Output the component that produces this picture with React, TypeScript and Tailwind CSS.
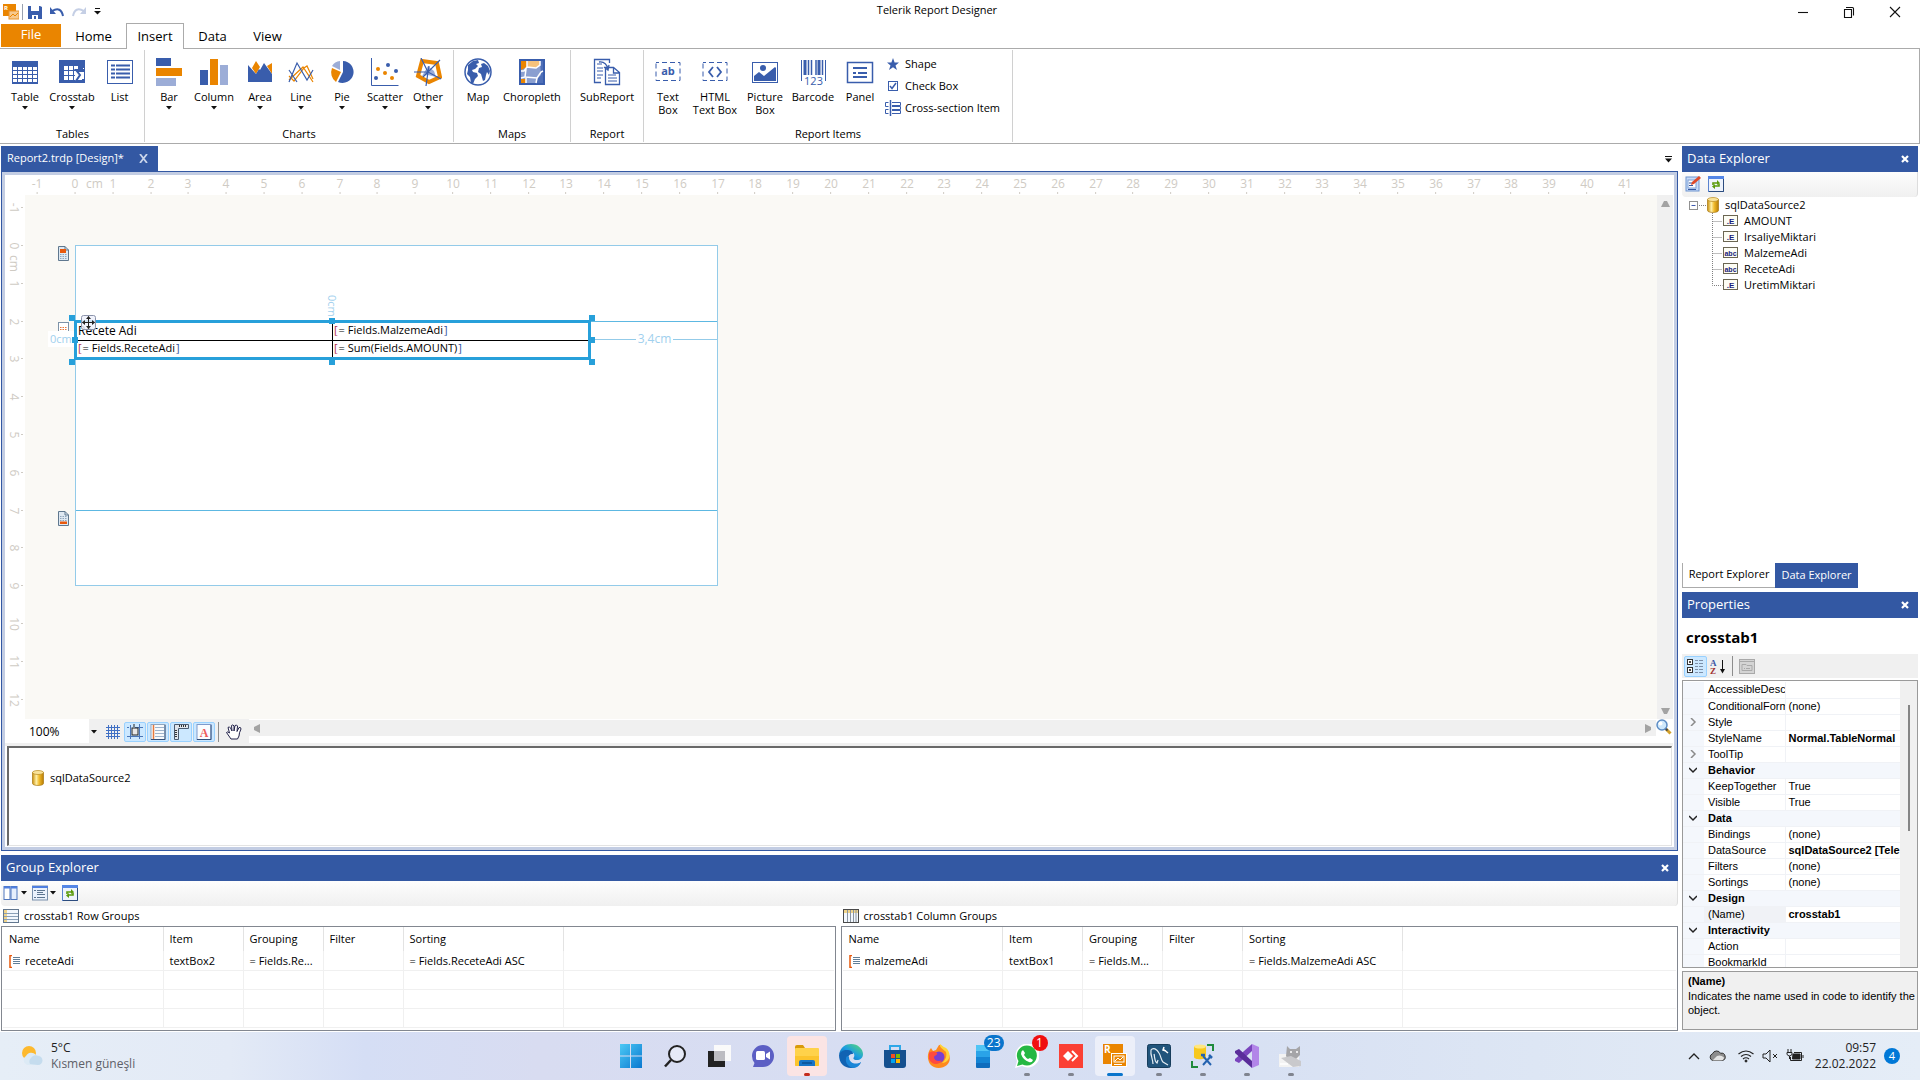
import type { ReactNode } from "react";
import clsx from "clsx";

const BLUE = "#395dac";
const ORANGE = "#ea8500";
const LIGHT = "#9cadd7";
const CM = 37.8;

/* ---------- ribbon icons ---------- */

const Big = ({ children }: { children: ReactNode }) => (
  <svg width="28" height="28" viewBox="0 0 28 28" fill="none" className="shrink-0">
    {children}
  </svg>
);

const TableIcon = () => (
  <Big>
    <rect x="1" y="3" width="26" height="23" fill={BLUE} />
    {[9, 13, 17, 21].map((y) =>
      [2, 7, 12, 17, 22].map((x) => <rect key={`${x}-${y}`} x={x} y={y} width="4" height="3" fill="#fff" />)
    )}
  </Big>
);

const CrosstabIcon = () => (
  <Big>
    <rect x="1" y="2" width="26" height="23" fill={BLUE} />
    {[8, 13, 18].map((y) => [6, 11, 16].map((x) => <rect key={`${x}-${y}`} x={x} y={y} width="4" height="4" fill="#fff" />))}
    <path d="M17 10h8v4h-8z M17 10v14h9V10z" fill="#fff" />
    <path d="M25 14v-2h-7l4 5-4 6h7v-2" stroke={BLUE} strokeWidth="2" />
  </Big>
);

const ListIcon = () => (
  <Big>
    <rect x="1.5" y="2.5" width="25" height="23" stroke={BLUE} />
    {[7, 11, 15, 19].map((y) => (
      <path key={y} d={`M5 ${y + 0.5}h4M10 ${y + 0.5}h14`} stroke={BLUE} strokeWidth="2" />
    ))}
  </Big>
);

const BarIcon = () => (
  <Big>
    <rect x="1" y="0" width="15" height="8" fill={BLUE} />
    <rect x="1" y="10" width="26" height="8" fill={ORANGE} />
    <rect x="1" y="20" width="20" height="8" fill={LIGHT} />
  </Big>
);

const ColumnIcon = () => (
  <Big>
    <rect x="0" y="12" width="8" height="15" fill={BLUE} />
    <rect x="10" y="1" width="8" height="26" fill={ORANGE} />
    <rect x="20" y="7" width="8" height="20" fill={LIGHT} />
  </Big>
);

const AreaIcon = () => (
  <Big>
    <path d="M10 3l4 6-4 7-4-6zM21 8l5-3v11z" fill={ORANGE} />
    <path d="M2 24V7l8 9 3-5 1 1 4-7 8 11v8z" fill={BLUE} />
  </Big>
);

const LineIcon = () => (
  <Big>
    <path d="M2 22L16 9l10 15M2 18l5 5 10-13 3-2 6 13" stroke={ORANGE} strokeWidth="1.2" />
    <path d="M2 24L10 5l10 17 6-10M2 12l8 12" stroke={BLUE} strokeWidth="1.2" />
  </Big>
);

const PieIcon = () => (
  <Big>
    <path d="M15 3a11 11 0 1 1-5 21l5-10z" fill={BLUE} />
    <path d="M13 14L8 24A12 12 0 0 1 4 10z" fill={ORANGE} />
    <path d="M12 12L4 8a10 10 0 0 1 8-5z" fill={LIGHT} />
  </Big>
);

const ScatterIcon = () => (
  <Big>
    <path d="M.5 0v27.500h27" stroke={BLUE} />
    <g fill={BLUE}>
      <circle cx="17" cy="7" r="2" />
      <circle cx="25" cy="13" r="2" />
      <circle cx="5" cy="20" r="2" />
    </g>
    <g fill={ORANGE}>
      <circle cx="7" cy="11" r="2" />
      <circle cx="14" cy="15" r="2" />
      <circle cx="21" cy="20" r="2" />
    </g>
  </Big>
);

const OtherIcon = () => (
  <Big>
    <path d="M8 3l15 2 3 14-11 5-11-6z" stroke={ORANGE} strokeWidth="4" />
    <path d="M14 8l6 5 2 6-8-2-6 1 3-5z" fill={LIGHT} />
    <path d="M7 0l7 14L26 2M0 14l14 0 13 7M14 14l-2 14M9 19l5-5 1-6" stroke={BLUE} strokeWidth="1.2" />
  </Big>
);

const MapIcon = () => (
  <Big>
    <circle cx="14" cy="14" r="13" fill="#fff" stroke={BLUE} strokeWidth="1.500" />
    <path
      d="M4 7l5-4 5-1 1 3-3 1 2 2-3 3-3 1 1 2 4 1 1 3-3 3-2 5-2-1-1-6-3-3 1-4zM17 6l3-1 4 3 2 5-1 4-2-3-1 3-1 5-2 1-2-7-3-2 1-4 3-1z"
      fill={BLUE}
    />
  </Big>
);

const ChoroplethIcon = () => (
  <Big>
    <rect x="1" y="1" width="26" height="26" fill={BLUE} />
    <rect x="3" y="3" width="22" height="22" fill="#8a9fd0" />
    <path d="M3 3h6v6l-6 3zM3 21h5v4H3z" fill={ORANGE} />
    <path d="M10 3h12v4l-5 3-8-1z" fill="#f5c27c" />
    <path d="M22 3h3v22h-7l1-4 4-4z" fill="#4f6fb8" />
    <path d="M9 3v6l9 1 4-3V3M9 9l-3 4-3 0M8 11l-1 8-4 1M7 19l12 1 4-6 2-1M18 25l1-5M8 25v-5" stroke="#fff" strokeWidth="1.500" />
  </Big>
);

const SubReportIcon = () => (
  <Big>
    <path d="M8 24.500H1.500V1.500h15V5" stroke={BLUE} strokeWidth="1.300" />
    <path d="M12.500 9.500h8l6 5v12h-14zM20.500 9.500v5.500h6" fill="#fff" stroke={BLUE} strokeWidth="1.300" />
    <path d="M4 6h5M4 10h6M4 13h6M4 17h6M4 20h4M15 17h8M15 20h9M15 23h9" stroke={BLUE} />
    <path d="M6 4q7-1 9 7M11 9l4 3 1-5" stroke={BLUE} strokeWidth="1.300" />
  </Big>
);

const DashBox = ({ label }: { label: string }) => (
  <Big>
    <rect x="2" y="4.500" width="24" height="18" stroke={BLUE} strokeDasharray="5 3" strokeDashoffset="2" />
    <text x="14" y="17" textAnchor="middle" fontSize="11" fontWeight="700" fontFamily="Open Sans, sans-serif" fill={BLUE}>
      {label}
    </text>
  </Big>
);

const HtmlBoxIcon = () => (
  <Big>
    <rect x="2" y="4.500" width="24" height="18" stroke={BLUE} strokeDasharray="5 3" strokeDashoffset="2" />
    <path d="M12 9l-4 5 4 5M16 9l4 5-4 5" stroke={BLUE} strokeWidth="1.800" />
  </Big>
);

const PictureIcon = () => (
  <Big>
    <rect x="1.500" y="4.500" width="25" height="20" stroke={BLUE} />
    <circle cx="12" cy="10" r="3" fill={BLUE} />
    <path d="M3 23v-5l5-4 5 4 11-9 1 1v13z" fill={BLUE} />
  </Big>
);

const BarcodeIcon = () => (
  <Big>
    <path d="M2.500 2v21M26.500 2v21" stroke={BLUE} />
    <path d="M6 2v15M20 2v15" stroke={BLUE} strokeWidth="3" />
    <path d="M9.500 2v15M12.500 2v15M17 2v15M23.500 2v15" stroke={BLUE} strokeWidth="1.500" />
    <text x="14.500" y="27" textAnchor="middle" fontSize="11" fontFamily="Open Sans, sans-serif" fill={BLUE}>
      123
    </text>
  </Big>
);

const PanelIcon = () => (
  <Big>
    <rect x="1.500" y="4.500" width="25" height="20" stroke={BLUE} strokeWidth="1.500" />
    <path d="M7 10h14M7 15h3M12 15h9M7 19h14" stroke={BLUE} strokeWidth="2" />
  </Big>
);

/* ---------- small icons ---------- */

const Caret = () => (
  <svg width="6" height="4" viewBox="0 0 6 4" className="shrink-0">
    <path d="M0 0h6L3 3.500z" fill="#111" />
  </svg>
);

const CloseX = ({ color = "#fff" }: { color?: string }) => (
  <svg width="8" height="8" viewBox="0 0 8 8">
    <path d="M1 1l6 6M7 1L1 7" stroke={color} strokeWidth="2.200" />
  </svg>
);

const Database = () => (
  <svg width="12" height="16" viewBox="0 0 12 16" className="shrink-0">
    <defs>
      <linearGradient id="gold">
        <stop offset="0" stopColor="#c98f0a" />
        <stop offset=".35" stopColor="#fff0a8" />
        <stop offset=".6" stopColor="#f2bc2c" />
        <stop offset="1" stopColor="#b87d05" />
      </linearGradient>
    </defs>
    <path d="M.5 2.500v11c0 2.600 11 2.600 11 0v-11z" fill="url(#gold)" stroke="#a87812" strokeWidth=".7" />
    <ellipse cx="6" cy="2.500" rx="5.500" ry="2" fill="#f9e39a" stroke="#b98a1c" strokeWidth=".7" />
  </svg>
);

const Refresh = () => (
  <svg width="16" height="16" viewBox="0 0 16 16">
    <rect x=".5" y=".5" width="15" height="15" fill="#eef3fc" stroke="#5a83cf" />
    <rect x="0" y="0" width="16" height="3" fill="#5486e6" />
    <path d="M15.500 3v12.500H1" stroke="#2c4c7e" fill="none" />
    <path d="M5 9V7h5M11 7.500V10H6" stroke="#5a9a0a" strokeWidth="1.600" fill="none" />
    <path d="M9 4l3 3-3 2zM7 8l-3 2.500L7 13z" fill="#5a9a0a" />
  </svg>
);

const EditSource = () => (
  <svg width="16" height="16" viewBox="0 0 16 16">
    <rect x="1" y="1" width="13" height="14" fill="#c9dcf8" stroke="#6d93cf" />
    <rect x="3" y="4" width="8" height="8" fill="#fff" stroke="#7d9fd6" />
    <path d="M4 7h5M4 9.500h4M3 13.500h8" stroke="#3557a0" />
    <path d="M6 9l1-3 7-6 2 2-7 6z" fill="#e04a2a" />
  </svg>
);

const SectionIcon = ({ band }: { band: "top" | "body" | "bottom" }) => (
  <svg width="11" height={band === "body" ? 11 : 15} viewBox={band === "body" ? "0 0 11 11" : "0 0 11 15"}>
    {band === "body" ? (
      <path d="M.5 0v10.500h10V0M.5.5h10" stroke="#7d93a8" fill="#fff" />
    ) : (
      <path d="M.5.5h6.500l3.500 3.500v10.500H.5z" stroke="#5f788f" fill="#dfe9f2" />
    )}
    {band !== "body" && <path d="M7 .5V4h3.500" stroke="#5f788f" fill="none" />}
    {band === "top" && <rect x="2" y="3" width="6" height="4" fill="#e8590c" />}
    {band === "bottom" && <rect x="2" y="10.500" width="7" height="2.500" fill="#e8590c" />}
    <path
      d={band === "bottom" ? "M2 5.500h7M2 7.500h7M2 9.500h7" : band === "top" ? "M2 8.500h7M2 10.500h7M2 12.500h7" : "M2 5.500h7M2 7.500h7M2 9.500h7"}
      stroke={band === "body" ? "#e8793c" : "#8ea5bb"}
      strokeDasharray="1.500 1"
    />
  </svg>
);

/* ---------- ribbon ---------- */

type Tool = { label: string; icon: ReactNode; width: string; menu?: boolean };

const groups: { title: string; width: string; tools: Tool[] }[] = [
  {
    title: "Tables",
    width: "w-36",
    tools: [
      { label: "Table", icon: <TableIcon />, width: "w-10", menu: true },
      { label: "Crosstab", icon: <CrosstabIcon />, width: "w-[54px]", menu: true },
      { label: "List", icon: <ListIcon />, width: "w-[41px]" },
    ],
  },
  {
    title: "Charts",
    width: "w-[309px]",
    tools: [
      { label: "Bar", icon: <BarIcon />, width: "w-10", menu: true },
      { label: "Column", icon: <ColumnIcon />, width: "w-[50px]", menu: true },
      { label: "Area", icon: <AreaIcon />, width: "w-[42px]", menu: true },
      { label: "Line", icon: <LineIcon />, width: "w-10", menu: true },
      { label: "Pie", icon: <PieIcon />, width: "w-[42px]", menu: true },
      { label: "Scatter", icon: <ScatterIcon />, width: "w-11", menu: true },
      { label: "Other", icon: <OtherIcon />, width: "w-[42px]", menu: true },
    ],
  },
  {
    title: "Maps",
    width: "w-[117px]",
    tools: [
      { label: "Map", icon: <MapIcon />, width: "w-10" },
      { label: "Choropleth", icon: <ChoroplethIcon />, width: "w-[68px]" },
    ],
  },
  { title: "Report", width: "w-[73px]", tools: [{ label: "SubReport", icon: <SubReportIcon />, width: "w-16" }] },
  {
    title: "Report Items",
    width: "w-[369px]",
    tools: [
      { label: "Text Box", icon: <DashBox label="ab" />, width: "w-10" },
      { label: "HTML Text Box", icon: <HtmlBoxIcon />, width: "w-[54px]" },
      { label: "Picture Box", icon: <PictureIcon />, width: "w-[46px]" },
      { label: "Barcode", icon: <BarcodeIcon />, width: "w-[50px]" },
      { label: "Panel", icon: <PanelIcon />, width: "w-11" },
    ],
  },
];

function breakLabel(label: string) {
  if (!label.includes("Box")) return label;
  const i = label.indexOf(" ");
  return (
    <>
      {label.slice(0, i)}
      <br />
      {label.slice(i + 1)}
    </>
  );
}

function ToolButton({ tool }: { tool: Tool }) {
  return (
    <button className={clsx("flex shrink-0 flex-col items-center pt-2", tool.width)}>
      {tool.icon}
      <span className="mt-1 whitespace-nowrap text-center leading-[13px]">{breakLabel(tool.label)}</span>
      {tool.menu && (
        <span className="mt-[3px]">
          <Caret />
        </span>
      )}
    </button>
  );
}

function SmallTools() {
  return (
    <div className="flex flex-col items-start gap-[2px] pl-[3px] pt-1">
      <button className="flex h-5 items-center gap-1">
        <svg width="16" height="16" viewBox="0 0 16 16">
          <path d="M8 2l1.600 4.500H14l-3.500 3 1.500 4.500-4-2.700L4 14l1.500-4.500L2 6.500h4.400z" fill={BLUE} />
        </svg>
        Shape
      </button>
      <button className="flex h-5 items-center gap-1">
        <svg width="16" height="16" viewBox="0 0 16 16" fill="none">
          <rect x="3.500" y="3.500" width="9" height="9" stroke={BLUE} />
          <path d="M5 8l2 2.500L11 5" stroke={BLUE} strokeWidth="1.500" />
        </svg>
        Check Box
      </button>
      <button className="flex h-5 items-center gap-1">
        <svg width="16" height="16" viewBox="0 0 16 16" fill="none">
          <path d="M3.500 2.500H.5v4h3M3.500 9.500H.5v4h3M7 2.500h8.500v3H7M7 6.500h8.500v3H7M7 10.500h8.500v3H7" stroke={BLUE} />
          <path d="M5.500 0v16" stroke={BLUE} strokeWidth="1.500" />
        </svg>
        Cross-section Item
      </button>
    </div>
  );
}

function TitleBar() {
  return (
    <header className="grid h-[23px] grid-cols-[1fr_auto_1fr] items-center">
      <div className="flex items-center pl-[3px]">
        <svg width="16" height="16" viewBox="0 0 16 16">
          <rect width="13" height="12" fill={ORANGE} />
          <text x="1" y="6" fontSize="6" fontWeight="700" fill="#fff" fontFamily="Open Sans, sans-serif">R</text>
          <rect x="6" y="7" width="10" height="8" fill="#f6c98e" stroke="#e8942c" />
          <path d="M7 13l3-3 2 2 3-3" stroke={ORANGE} fill="none" />
        </svg>
        <span className="ml-[3px] h-4 w-px bg-gray-400" />
        <button aria-label="Save" className="ml-[5px]">
          <svg width="14" height="14" viewBox="0 0 14 14">
            <path d="M0 1h12l2 1v12H0z" fill={BLUE} />
            <path d="M3 1h8v5H3zM4 10h6v4H8v-3H6v3H4z" fill="#fff" />
          </svg>
        </button>
        <button aria-label="Undo" className="ml-2">
          <svg width="14" height="12" viewBox="0 0 14 12" fill="none">
            <path d="M2 5q9-5 11 5" stroke={BLUE} strokeWidth="2" />
            <path d="M0 1v7h6z" fill={BLUE} />
          </svg>
        </button>
        <button aria-label="Redo" className="ml-2">
          <svg width="14" height="12" viewBox="0 0 14 12" fill="none">
            <path d="M12 5Q3 0 1 10" stroke="#c5cfe5" strokeWidth="2" />
            <path d="M14 1v7H8z" fill="#c5cfe5" />
          </svg>
        </button>
        <button aria-label="Customize toolbar" className="ml-2">
          <svg width="7" height="7" viewBox="0 0 7 7">
            <path d="M1 .5h5" stroke="#111" />
            <path d="M0 3h7L3.500 6.500z" fill="#111" />
          </svg>
        </button>
      </div>
      <h1 className="pr-[46px] pb-[2px]">Telerik Report Designer</h1>
      <div className="flex justify-end">
        {["M3 8.500h10", "M3.500 5.500h7v8h-7zM5 3.500h6.500q1 0 1 1v7", "M3 3l10 10M13 3L3 13"].map((d, i) => (
          <button key={d} aria-label={["Minimize", "Restore", "Close"][i]} className="flex w-[46px] justify-center pr-1">
            <svg width="16" height="16" viewBox="0 0 16 16">
              <path d={d} stroke="#111" strokeWidth="1.100" fill="none" />
            </svg>
          </button>
        ))}
      </div>
    </header>
  );
}

function Ribbon() {
  return (
    <>
      <nav className="flex h-[26px] items-end border-b border-[#ababab] text-[13px] leading-4">
        <button className="mb-px ml-px h-[23px] w-[60px] bg-[#ea8500] pb-1 text-white">File</button>
        <button className="h-[23px] w-[65px] pb-px">Home</button>
        <button className="-mb-px h-[26px] w-[58px] border border-b-0 border-[#ababab] bg-white pb-px">Insert</button>
        <button className="h-[23px] w-[57px] pb-px">Data</button>
        <button className="h-[23px] w-[53px] pb-px">View</button>
      </nav>
      <section className="flex h-[95px] border-r border-b border-[#ababab] pt-px pb-px pl-px">
        {groups.map((g) => (
          <div key={g.title} className={clsx("flex shrink-0 flex-col border-r border-[#d0d0d0]", g.width)}>
            <div className="flex flex-1 pl-1">
              {g.tools.map((t) => (
                <ToolButton key={t.label} tool={t} />
              ))}
              {g.title === "Report Items" && <SmallTools />}
            </div>
            <div className="h-4 text-center leading-4">{g.title}</div>
          </div>
        ))}
      </section>
    </>
  );
}

/* ---------- design surface ---------- */

const range = (from: number, to: number) => Array.from({ length: to - from + 1 }, (_, i) => from + i);

function TopRuler() {
  return (
    <div className="relative h-5 shrink-0 overflow-hidden bg-white text-xs text-[#cfcbc4]">
      {range(-1, 41).map((n) => (
        <span
          key={n}
          className="absolute top-px flex -translate-x-1/2 flex-col items-center leading-4"
          style={{ left: Math.round(70 + n * CM) }}
        >
          {n}
          <i className="h-[2px] w-px bg-[#cfcbc4]" />
        </span>
      ))}
      <span className="absolute top-px left-[81px] leading-4">cm</span>
    </div>
  );
}

function SideRuler() {
  return (
    <div className="relative w-5 shrink-0 overflow-hidden bg-white text-xs text-[#cfcbc4]">
      {range(-1, 12).map((n) => (
        <span
          key={n}
          className="absolute left-0 flex w-[18px] -translate-y-1/2 items-center justify-between"
          style={{ top: Math.round(51 + n * CM) }}
        >
          <b className="font-normal leading-[18px] [writing-mode:vertical-rl]">{n}</b>
        </span>
      ))}
      {range(-1, 12).map((n) => (
        <i key={n} className="absolute right-[2px] h-px w-[2px] bg-[#cfcbc4]" style={{ top: Math.round(50 + n * CM) }} />
      ))}
      <span className="absolute top-[60px] left-0 leading-[18px] [writing-mode:vertical-rl]">cm</span>
    </div>
  );
}

const handles = [
  [44, 120],
  [304, 123],
  [564, 120],
  [47, 142],
  [564, 142],
  [44, 164],
  [304, 164],
  [564, 164],
];

const Bracket = ({ children }: { children: ReactNode }) => (
  <>
    <span className="text-[#b0304a]">[</span>
    <span className="px-px">{children}</span>
    <span className="text-[#2d52a0]">]</span>
  </>
);

function Canvas() {
  return (
    <div className="relative flex-1 overflow-hidden bg-[#faf9f5]">
      <div className="absolute top-[50px] left-[50px] flex h-[341px] w-[643px] flex-col border border-[#93cbe9] bg-white">
        <div className="h-[76px] border-b border-[#5db8e2]" />
        <div className="h-[189px] border-b border-[#5db8e2]" />
      </div>
      <div className="absolute top-[51px] left-[33px]"><SectionIcon band="top" /></div>
      <div className="absolute top-[127px] left-[33px]"><SectionIcon band="body" /></div>
      <div className="absolute top-[316px] left-[33px]"><SectionIcon band="bottom" /></div>

      {/* distance guides */}
      <span className="absolute top-[136px] left-[23px] bg-white px-[2px] leading-4 text-[#9fd0ee]">0cm</span>
      <span className="absolute top-[100px] left-[299px] leading-4 text-[#9fd0ee] [writing-mode:vertical-rl]">0cm</span>
      <div className="absolute top-[136px] left-[567px] flex w-[125px] items-center gap-[2px] text-xs leading-4 text-[#9fd0ee]">
        <i className="h-px flex-1 bg-[#93cbe9]" />
        3,4cm
        <i className="h-px flex-1 bg-[#93cbe9]" />
      </div>

      <table className="absolute top-[125px] left-[49px] h-10 w-[517px] table-fixed border-collapse border-[3px] border-[#27a0da] bg-white text-xs leading-[14px]">
        <tbody>
          <tr className="h-[18px] border-b border-black">
            <td className="border-r border-black p-0 pl-px align-middle">Recete Adi</td>
            <td className="p-0 pl-px align-top text-[11px]"><Bracket>= Fields.MalzemeAdi</Bracket></td>
          </tr>
          <tr className="h-[18px] text-[11px]">
            <td className="border-r border-black p-0 pl-px align-top"><Bracket>= Fields.ReceteAdi</Bracket></td>
            <td className="p-0 pl-px align-top"><Bracket>= Sum(Fields.AMOUNT)</Bracket></td>
          </tr>
        </tbody>
      </table>
      {handles.map(([x, y]) => (
        <i key={`${x}-${y}`} className="absolute size-[6px] bg-[#27a0da]" style={{ left: x, top: y }} />
      ))}
      <svg className="absolute top-[120px] left-[56px]" width="15" height="15" viewBox="0 0 15 15">
        <rect x=".5" y=".5" width="14" height="14" rx="2" fill="#eef1fb" fillOpacity=".85" stroke="#8b93ab" />
        <path d="M7.500 1.500v12M1.500 7.500h12" stroke="#222" />
        <path d="M7.500 1l2.500 3H5zM7.500 14L5 11h5zM1 7.500L4 5v5zM14 7.500L11 10V5z" fill="#222" />
      </svg>
    </div>
  );
}

function VScroll() {
  return (
    <div className="mr-px flex w-4 shrink-0 flex-col items-center justify-between bg-[#f0f0f0] pt-[5px] pb-1">
      <svg width="9" height="7" viewBox="0 0 9 7"><path d="M0 7L3 1h3l3 6z" fill="#a3a3a3" /></svg>
      <svg width="9" height="7" viewBox="0 0 9 7"><path d="M0 0l3 6h3l3-6z" fill="#a3a3a3" /></svg>
    </div>
  );
}

function SurfaceToolbar() {
  const pressed = "flex h-5 w-[22px] items-center justify-center rounded-[2px] border border-[#99d1ff] bg-[#cce8ff]";
  return (
    <div className="flex h-6 shrink-0 pl-[21px]">
      <label className="relative flex h-6 w-[75px] bg-[#f0f0f0]">
        <select aria-label="Zoom" className="mr-3 w-full appearance-none bg-white pt-px pl-[3px] text-xs outline-none">
          <option>100%</option>
        </select>
        <span className="absolute top-[11px] right-1"><Caret /></span>
      </label>
      <div className="flex w-[148px] items-center gap-px bg-[#f0f0f0] pt-px pl-[2px]">
        <button aria-label="Show grid" className="flex w-5 justify-center">
          <svg width="14" height="14" viewBox="0 0 14 14">
            <path d="M2.500 0v14M5.500 0v14M8.500 0v14M11.500 0v14M0 2.500h14M0 5.500h14M0 8.500h14M0 11.500h14" stroke="#3f6fc4" />
          </svg>
        </button>
        <button aria-label="Snap to grid" className={pressed}>
          <svg width="16" height="16" viewBox="0 0 16 16">
            <path d="M3.500 1v14M12.500 0v15M0 12.500h16M0 3.500h2M8 3.500h8" stroke="#4b76b8" />
            <rect x="5" y="4" width="6" height="7" fill="#e8e8e8" stroke="#222" />
            <path d="M7 0v3" stroke="#222" />
          </svg>
        </button>
        <button aria-label="Snap lines" className={pressed}>
          <svg width="16" height="16" viewBox="0 0 16 16">
            <rect x="1" y=".5" width="14" height="15" fill="#f8fafc" stroke="#8fa5bd" />
            <path d="M5 3.500h9M5 6.500h9M5 9.500h9M5 12.500h9" stroke="#9fb4cc" />
            <path d="M3.500 1v14" stroke="#e8793c" strokeWidth="1.500" />
            <path d="M15 1v14.500H1" stroke="#33507a" fill="none" />
          </svg>
        </button>
        <button aria-label="Rulers" className={pressed}>
          <svg width="16" height="16" viewBox="0 0 16 16">
            <path d="M1.500 15.500v-15h14v4H5.500v11z" fill="#dfe5ec" stroke="#4a5a70" />
            <path d="M6.500 1v2M8.500 1v2M10.500 1v2M12.500 1v2M2 6.500h2M2 8.500h2M2 10.500h2M2 12.500h2" stroke="#333" />
          </svg>
        </button>
        <button aria-label="Show font" className={pressed}>
          <svg width="16" height="16" viewBox="0 0 16 16">
            <rect x="1" y=".5" width="14" height="15" fill="#fafcff" stroke="#7e9acb" />
            <text x="8" y="13" textAnchor="middle" fontSize="12" fontWeight="700" fill="#ee5a5a" fontFamily="Liberation Serif, serif">A</text>
            <path d="M15 1v14.500H1" stroke="#33507a" fill="none" />
          </svg>
        </button>
        <i className="ml-[2px] h-5 w-px bg-[#8d8d8d]" />
        <button aria-label="Pan" className="ml-[5px]">
          <svg width="18" height="18" viewBox="0 0 18 18">
            <path
              d="M6 16L1.500 9.500q1-1.500 3 .5L3 4.500q1.500-1.500 2.500.5L7 8 6.500 2.500q1.500-1.500 2.500.5V8l1-5.500q2-1 2.500.5L12 8.500l2-4q2-.5 2 1.500-2 4-2 7l-1.500 3z"
              fill="#fff"
              stroke="#22224a"
            />
          </svg>
        </button>
      </div>
      <div className="flex h-[17px] flex-1 items-center justify-between border-t border-white bg-[#f0f0f0] px-1">
        <svg width="7" height="9" viewBox="0 0 7 9"><path d="M7 0L1 3v3l6 3z" fill="#a3a3a3" /></svg>
        <svg width="7" height="9" viewBox="0 0 7 9"><path d="M0 0l6 3v3L0 9z" fill="#a3a3a3" /></svg>
      </div>
      <button aria-label="Zoom preview" className="mr-[2px] h-4 w-4 shrink-0">
        <svg width="16" height="16" viewBox="0 0 16 16">
          <path d="M10 10l4.500 4.500" stroke="#d3a12c" strokeWidth="3" />
          <path d="M9.500 9.500l2 2" stroke="#444" strokeWidth="2" />
          <circle cx="6" cy="6" r="5" fill="#cfe8fb" stroke="#5d8cc4" strokeWidth="1.500" />
          <circle cx="4.500" cy="4.500" r="2" fill="#fff" />
        </svg>
      </button>
    </div>
  );
}

function Designer() {
  return (
    <>
      <div className="flex h-[25px] shrink-0 items-start justify-between">
        <div className="flex h-[25px] w-[157px] items-center bg-[#3358a3] pl-[6px] text-white">
          <span className="flex-1 whitespace-nowrap pb-px">Report2.trdp [Design]*</span>
          <button aria-label="Close document" className="mr-[10px]">
            <svg width="9" height="9" viewBox="0 0 9 9"><path d="M1 0l7 9M8 0L1 9" stroke="#c9d4ea" strokeWidth="1.800" /></svg>
          </button>
        </div>
        <button aria-label="Open documents" className="mt-[10px] mr-[6px]">
          <svg width="7" height="7" viewBox="0 0 7 7">
            <path d="M0 .5h7" stroke="#111" />
            <path d="M0 2.500h7L3.500 6.500z" fill="#111" />
          </svg>
        </button>
      </div>
      <div className="flex min-h-0 flex-1 flex-col border border-[#3358a3] bg-[#c3cde3] p-[3px]">
        <div className="flex min-h-0 flex-1 flex-col bg-white">
          <TopRuler />
          <div className="flex min-h-0 flex-1">
            <SideRuler />
            <Canvas />
            <VScroll />
          </div>
          <SurfaceToolbar />
          <div className="mr-px h-[3px] shrink-0 bg-[#f0f0f0]" />
          <div className="mx-[2px] mb-px h-[100px] shrink-0 border-t-2 border-r border-b border-l-2 border-[#e3e3e3] border-t-[#696969] border-l-[#696969] px-[23px] pt-[22px]">
            <div className="flex items-center gap-[6px] leading-4">
              <Database />
              sqlDataSource2
            </div>
          </div>
        </div>
      </div>
    </>
  );
}

/* ---------- group explorer ---------- */

function PanelHeader({ title }: { title: string }) {
  return (
    <div className="flex h-[26px] shrink-0 items-center justify-between bg-[#3358a3] pr-[9px] pl-[5px] text-[13px] text-white">
      <h2>{title}</h2>
      <button aria-label={`Close ${title}`}><CloseX /></button>
    </div>
  );
}

function GroupTable({ row }: { row: string[] }) {
  return (
    <div className="flex-1 overflow-hidden border border-[#828790] px-px">
      <table className="w-full table-fixed border-collapse">
        <colgroup>
          <col className="w-40" />
          <col className="w-20" />
          <col className="w-20" />
          <col className="w-20" />
          <col className="w-40" />
          <col />
        </colgroup>
        <thead>
          <tr className="h-6">
            {["Name", "Item", "Grouping", "Filter", "Sorting"].map((h) => (
              <th key={h} className="border-r border-[#e3e3e3] p-0 pl-[6px] text-left font-normal">{h}</th>
            ))}
            <th />
          </tr>
        </thead>
        <tbody>
          {range(0, 3).map((r) => (
            <tr key={r} className="h-[19px] border-b border-[#f0f0f0]">
              {row.map((c, i) => (
                <td key={i} className={clsx("p-0 pt-[2px] pl-[6px] leading-4 whitespace-nowrap", i < 5 && "border-r border-[#f0f0f0]")}>
                  {r === 0 && i === 0 ? (
                    <span className="flex items-center gap-1">
                      <svg width="12" height="13" viewBox="0 0 12 13">
                        <path d="M3 .5H1v12h2" stroke="#e8590c" strokeWidth="1.500" fill="none" />
                        <path d="M4 2.500h7M4 4.500h7M4 6.500h7M4 8.500h7" stroke="#5f7f99" />
                      </svg>
                      {c}
                    </span>
                  ) : (
                    r === 0 && c
                  )}
                </td>
              ))}
            </tr>
          ))}
        </tbody>
      </table>
    </div>
  );
}

function GroupExplorer() {
  return (
    <section className="mt-1 mb-px flex h-44 shrink-0 flex-col">
      <PanelHeader title="Group Explorer" />
      <div className="flex h-[25px] shrink-0 items-center rounded-b border-r border-[#ddd] bg-gradient-to-b from-[#fdfdfd] to-[#f0f0f0] pb-[2px] pl-[2px]">
        <button aria-label="Columns" className="flex items-center gap-[2px]">
          <svg width="16" height="16" viewBox="0 0 16 16">
            <rect x="1" y="1.500" width="6" height="13" fill="#fff" stroke="#4f76bd" />
            <rect x="8" y="1.500" width="6" height="13" fill="#e6effc" stroke="#4f76bd" />
            <path d="M1 2.500h6M8 2.500h6" stroke="#4f7fe0" strokeWidth="2" />
          </svg>
          <Caret />
        </button>
        <button aria-label="Rows" className="ml-[5px] flex items-center gap-[2px]">
          <svg width="16" height="16" viewBox="0 0 16 16">
            <rect x=".5" y="1" width="15" height="14" fill="#eaf1fc" stroke="#7a90ac" />
            <path d="M0 2h16" stroke="#4f7fe0" strokeWidth="2" />
            <path d="M2 5.500h2M5 5.500h8M5 7.500h6M5 9.500h8M2 12.500h2M5 12.500h8" stroke="#5d7590" />
          </svg>
          <Caret />
        </button>
        <button aria-label="Refresh groups" className="ml-[6px]"><Refresh /></button>
      </div>
      <div className="grid min-h-0 flex-1 grid-cols-[calc(50%-4px)_1fr] gap-[5px]">
        <div className="flex min-h-0 flex-col">
          <div className="flex h-5 shrink-0 items-center gap-[5px] pl-[2px]">
            <svg width="16" height="14" viewBox="0 0 16 14">
              <rect x=".5" y=".5" width="15" height="13" fill="#f2f7fd" stroke="#62778f" />
              <rect x="1" y="1" width="3" height="12" fill="#f0d48a" />
              <path d="M1 4.500h14M1 7.500h14M1 10.500h14" stroke="#8aa0b8" />
            </svg>
            crosstab1 Row Groups
          </div>
          <GroupTable row={["receteAdi", "textBox2", "= Fields.Re...", "", "= Fields.ReceteAdi ASC", ""]} />
        </div>
        <div className="flex min-h-0 flex-col">
          <div className="flex h-5 shrink-0 items-center gap-[5px] pl-[2px]">
            <svg width="16" height="14" viewBox="0 0 16 14">
              <rect x=".5" y=".5" width="15" height="13" fill="#f2f7fd" stroke="#4a4a4a" />
              <rect x="1" y="1" width="14" height="3" fill="#f0d48a" />
              <path d="M4.500 1v12M7.500 1v12M10.500 1v12M13 1v12" stroke="#8a94a0" />
            </svg>
            crosstab1 Column Groups
          </div>
          <GroupTable row={["malzemeAdi", "textBox1", "= Fields.M...", "", "= Fields.MalzemeAdi ASC", ""]} />
        </div>
      </div>
    </section>
  );
}

/* ---------- right side ---------- */

const fields: [string, string][] = [
  [".E", "AMOUNT"],
  [".E", "IrsaliyeMiktari"],
  ["abc", "MalzemeAdi"],
  ["abc", "ReceteAdi"],
  [".E", "UretimMiktari"],
];

function DataExplorer() {
  return (
    <section className="flex min-h-0 flex-1 flex-col">
      <PanelHeader title="Data Explorer" />
      <div className="flex h-[25px] shrink-0 items-center gap-[7px] rounded-b border-r border-[#ddd] bg-gradient-to-b from-[#fdfdfd] to-[#f0f0f0] pb-[2px] pl-[3px]">
        <button aria-label="Edit data source"><EditSource /></button>
        <button aria-label="Refresh data"><Refresh /></button>
      </div>
      <div className="min-h-0 flex-1 pl-[7px] leading-4">
        <div className="flex items-center">
          <svg width="18" height="16" viewBox="0 0 18 16">
            <rect x=".5" y="4.500" width="8" height="8" fill="#fff" stroke="#919191" />
            <path d="M2.500 8.500h4" stroke="#3f5bb0" />
            <path d="M10 8.500h8" stroke="#808080" strokeDasharray="1 1" />
          </svg>
          <Database />
          <span className="ml-[6px]">sqlDataSource2</span>
        </div>
        <ul className="pl-[23px]">
          {fields.map(([kind, name], i) => (
            <li key={name} className="flex h-4 items-center">
              <svg width="26" height="16" viewBox="0 0 26 16">
                <path d={i === fields.length - 1 ? "M.5 0v8.500h10" : "M.5 0v16M.5 8.500h10"} stroke="#808080" strokeDasharray="1 1" fill="none" />
                <rect x="11.500" y="2.500" width="14" height="10" fill="#fdfdf4" stroke="#6b6652" />
                <text x="18.500" y="10.500" textAnchor="middle" fontSize={kind === "abc" ? 7 : 8} fontWeight="700" fontFamily="Liberation Sans, sans-serif" fill="#1b1b7a">
                  {kind}
                </text>
              </svg>
              <span className="ml-[6px]">{name}</span>
            </li>
          ))}
        </ul>
      </div>
      <div className="flex h-[25px] shrink-0">
        <button className="w-[93px] border-b border-l border-[#ababab] pb-px">Report Explorer</button>
        <button className="w-[83px] bg-[#3358a3] pb-px text-white">Data Explorer</button>
      </div>
    </section>
  );
}

type Prop = { name: string; value?: string; bold?: boolean; group?: boolean; open?: boolean; selected?: boolean };

const props: Prop[] = [
  { name: "AccessibleDesc" },
  { name: "ConditionalForm", value: "(none)" },
  { name: "Style", open: false },
  { name: "StyleName", value: "Normal.TableNormal", bold: true },
  { name: "ToolTip", open: false },
  { name: "Behavior", group: true },
  { name: "KeepTogether", value: "True" },
  { name: "Visible", value: "True" },
  { name: "Data", group: true },
  { name: "Bindings", value: "(none)" },
  { name: "DataSource", value: "sqlDataSource2 [Tele", bold: true },
  { name: "Filters", value: "(none)" },
  { name: "Sortings", value: "(none)" },
  { name: "Design", group: true },
  { name: "(Name)", value: "crosstab1", bold: true, selected: true },
  { name: "Interactivity", group: true },
  { name: "Action" },
  { name: "BookmarkId" },
];

function Properties() {
  return (
    <section className="mt-1 flex shrink-0 flex-col">
      <PanelHeader title="Properties" />
      <h3 className="h-9 pl-1 text-[15px] leading-[38px] font-bold">crosstab1</h3>
      <div className="flex h-6 items-center bg-[#f0f0f0] pl-[2px]">
        <button aria-label="Categorized" className="flex h-[21px] w-[23px] items-center justify-center rounded-[2px] border border-[#99d1ff] bg-[#cce8ff]">
          <svg width="17" height="16" viewBox="0 0 17 16">
            <rect x=".5" y="1.500" width="5" height="5" fill="#fff" stroke="#333" />
            <rect x=".5" y="9.500" width="5" height="5" fill="#fff" stroke="#333" />
            <path d="M2 4h2M3 3v2M2 12h2M3 11v2" stroke="#111" />
            <path d="M8 2.500h3M8 5.500h3M8 8.500h3M8 11.500h3M8 14.500h3M12 2.500h4M12 5.500h4M12 8.500h4M12 11.500h4M12 14.500h4" stroke="#7d8fa8" />
          </svg>
        </button>
        <button aria-label="Alphabetical" className="ml-[3px]">
          <svg width="17" height="17" viewBox="0 0 17 17">
            <text x="0" y="8" fontSize="9" fontWeight="700" fill="#3a55a4" fontFamily="Liberation Serif, serif">A</text>
            <text x="0" y="16" fontSize="9" fontWeight="700" fill="#a03030" fontFamily="Liberation Serif, serif">Z</text>
            <path d="M12.500 2v12" stroke="#111" />
            <path d="M10 11h5l-2.500 4.500z" fill="#111" />
          </svg>
        </button>
        <i className="ml-[5px] h-5 w-px bg-[#8d8d8d]" />
        <button aria-label="Property pages" className="ml-[6px]" disabled>
          <svg width="16" height="15" viewBox="0 0 16 15" fill="none" stroke="#a9a9a9">
            <rect x=".5" y=".5" width="15" height="14" fill="#d4d4d4" />
            <path d="M3 11.500v-6h4l1 1h5v5zM5 9.500h1M7 9.500h4M1 2.500h14" />
          </svg>
        </button>
      </div>
      <div className="mt-[2px] flex h-72 overflow-hidden border border-[#9a9a9a] font-['Liberation_Sans',sans-serif]">
        <table className="mt-px w-full flex-1 table-fixed border-collapse self-start leading-[15px]">
          <colgroup>
            <col className="w-[21px]" />
            <col className="w-[81px]" />
            <col />
          </colgroup>
          <tbody>
            {props.map((p) => (
              <tr key={p.name} className={clsx("h-4 border-b border-[#f0f2f6]", p.group && "bg-[#f4f7fc]")}>
                <td className="bg-[#f4f7fc] p-0 pl-[6px]">
                  {(p.group || p.open === false) && (
                    <svg width="8" height="8" viewBox="0 0 8 8" fill="none">
                      <path d={p.group ? "M0 2l4 4 4-4" : "M2 0l4 4-4 4"} stroke={p.group ? "#222" : "#8a8a8a"} strokeWidth="1.500" />
                    </svg>
                  )}
                </td>
                <td
                  colSpan={p.group ? 2 : 1}
                  className={clsx(
                    "overflow-hidden p-0 pl-1 whitespace-nowrap",
                    p.group ? "font-bold" : "border-r border-[#f0f2f6]",
                    p.selected && "bg-[#f0f2f6]"
                  )}
                >
                  {p.name}
                </td>
                {!p.group && (
                  <td className={clsx("overflow-hidden p-0 pl-[3px] whitespace-nowrap", p.bold && "font-bold")}>{p.value}</td>
                )}
              </tr>
            ))}
          </tbody>
        </table>
        <div className="w-[17px] shrink-0 bg-[#f0f0f0] pt-6 pl-2">
          <div className="h-[126px] w-[2px] bg-[#858585]" />
        </div>
      </div>
      <div className="mt-[3px] mb-[2px] h-[59px] border border-[#9a9a9a] bg-[#f0f0f0] pt-px pl-[5px] font-['Liberation_Sans',sans-serif] leading-[14px]">
        <b className="block leading-4">(Name)</b>
        Indicates the name used in code to identify the object.
      </div>
    </section>
  );
}

/* ---------- taskbar ---------- */

type App = { name: string; icon: ReactNode; dot?: string; badge?: string; badgeColor?: string; tile?: string };

const Art = ({ children }: { children: ReactNode }) => (
  <svg width="24" height="24" viewBox="0 0 24 24" fill="none">
    {children}
  </svg>
);

const apps: App[] = [
  {
    name: "Start",
    icon: (
      <Art>
        <defs>
          <linearGradient id="win" x1="0" y1="0" x2="1" y2="1">
            <stop offset="0" stopColor="#4cc9f5" />
            <stop offset="1" stopColor="#0a78d0" />
          </linearGradient>
        </defs>
        <path d="M1 0h10v11.500H1zM12 0h11v11.500H12zM1 12.500h10V24H1zM12 12.500h11V24H12z" fill="url(#win)" />
      </Art>
    ),
  },
  {
    name: "Search",
    icon: (
      <Art>
        <circle cx="14" cy="10" r="8" stroke="#222" strokeWidth="2" fill="#e6eaf7" />
        <path d="M8 16l-6 6.500" stroke="#222" strokeWidth="2.500" />
      </Art>
    ),
  },
  {
    name: "Task view",
    icon: (
      <Art>
        <rect x="7" y="1" width="17" height="16" fill="#fafafa" />
        <rect x="1" y="7" width="17" height="16" fill="#222" />
        <rect x="7" y="7" width="11" height="10" fill="#bdbdc2" />
      </Art>
    ),
  },
  {
    name: "Chat",
    icon: (
      <Art>
        <path d="M1 12A11 11 0 1 1 12 23H2l1.500-4A11 11 0 0 1 1 12z" fill="#5c5fc4" />
        <rect x="5" y="7" width="9" height="9" rx="1.500" fill="#fff" />
        <path d="M15 10l4-2.500v8L15 13z" fill="#fff" />
      </Art>
    ),
  },
  {
    name: "File Explorer",
    dot: "h-[3px] w-[6px] bg-[#c42b1c]",
    tile: "bg-[#fbe4e4]",
    icon: (
      <Art>
        <path d="M0 3q0-2 2-2h6l2 3v4H0z" fill="#d99a0b" />
        <rect x="0" y="4" width="24" height="18" rx="1" fill="#ffd24a" />
        <path d="M0 12h24v9q0 1-1 1H1q-1 0-1-1z" fill="#fcc42d" />
        <path d="M4 22v-4q0-2 2-2h12q2 0 2 2v4z" fill="#1774c7" />
        <path d="M7 19h10" stroke="#0b4f92" strokeWidth="1.500" />
      </Art>
    ),
  },
  {
    name: "Edge",
    icon: (
      <Art>
        <defs>
          <linearGradient id="edge" x1="0" y1="1" x2="1" y2="0">
            <stop offset="0" stopColor="#0c59a4" />
            <stop offset=".5" stopColor="#1b9de2" />
            <stop offset="1" stopColor="#5fe06a" />
          </linearGradient>
        </defs>
        <path d="M0 11C1 3 7 0 12 0c7 0 12 5 12 10 0 4-3 6-6 6-4 0-4-2-3-3 1-2 0-5-4-5-5 0-11 1-11 3z" fill="url(#edge)" />
        <path d="M0 11c1-3 4-5 8-5 3 0 6 1 6 4-5-1-6 5-3 8 3 3 8 3 11 0-2 4-6 6-10 6C5 24 0 19 0 11z" fill="#1163b3" />
        <path d="M8 12c-3 4 0 11 6 12 4 0 7-3 8-6-4 3-12 2-12-5z" fill="#1a86d8" />
      </Art>
    ),
  },
  {
    name: "Store",
    icon: (
      <Art>
        <path d="M7 6V2h10v4" stroke="#2fa8e8" strokeWidth="2" />
        <path d="M1 6h22v15q0 3-3 3H4q-3 0-3-3z" fill="#15508f" />
        <path d="M8 10h4v4H8z" fill="#f25022" />
        <path d="M13 10h4v4h-4z" fill="#7fba00" />
        <path d="M8 15h4v4H8z" fill="#00a4ef" />
        <path d="M13 15h4v4h-4z" fill="#ffb900" />
      </Art>
    ),
  },
  {
    name: "Firefox",
    icon: (
      <Art>
        <path d="M12 1c3 0 3 2 6 4 6 5 6 12 2 16-5 4-13 4-17-1C0 15 0 9 4 4l2 3 3-1z" fill="#ff8a1e" />
        <path d="M13 0c-1 3 3 5 6 8 1 4 0 8-4 11 8 0 10-10 4-15-2-1-4-2-6-4z" fill="#ffd43a" />
        <circle cx="12" cy="13" r="5.500" fill="#7a3fd0" />
        <path d="M2 9c2-2 6-2 8 0 1 2-2 2-3 4 0 4 5 5 8 3-2 5-10 6-13-1z" fill="#ff4b3e" />
      </Art>
    ),
  },
  {
    name: "Phone",
    badge: "23",
    badgeColor: "bg-[#0a75cc]",
    icon: (
      <Art>
        <rect x="5" y="1" width="14" height="23" rx="1" fill="#0f6cbd" />
        <path d="M5 1h14v6H5z" fill="#51c5f5" />
        <path d="M5 7h14v6H5z" fill="#2aa3e8" />
        <path d="M5 13h14v6H5z" fill="#1484d4" />
      </Art>
    ),
  },
  {
    name: "WhatsApp",
    badge: "1",
    badgeColor: "bg-[#f00f0f]",
    dot: "h-[3px] w-[6px] bg-[#80848f]",
    icon: (
      <Art>
        <path d="M0 24l2-7A12 12 0 1 1 7 22z" fill="#fff" />
        <path d="M2 22l1.500-5A10 10 0 1 1 7.500 20.500z" fill="#25b843" />
        <path d="M8 6l2 3-1 2q2 3 4 4l2-1 3 2q-1 3-4 2Q8 16 6 10q0-3 2-4z" fill="#fff" />
      </Art>
    ),
  },
  {
    name: "AnyDesk",
    dot: "h-[3px] w-[6px] bg-[#80848f]",
    icon: (
      <Art>
        <rect width="24" height="24" fill="#fb4034" />
        <path d="M9 7l5 5-5 5-5-5z" fill="#fff" />
        <path d="M13 7l5 5-5 5" stroke="#fff" strokeWidth="2" />
      </Art>
    ),
  },
  {
    name: "Report Designer",
    dot: "h-[3px] w-4 bg-[#0a75cc]",
    tile: "bg-[#eceff9]",
    icon: (
      <Art>
        <rect x="0" y="0" width="20" height="20" fill={ORANGE} />
        <text x="1" y="9" fontSize="10" fontWeight="700" fill="#fff" fontFamily="Open Sans, sans-serif">R</text>
        <rect x="8.500" y="9.500" width="15" height="13" fill={ORANGE} stroke="#fff" />
        <rect x="11" y="12" width="10" height="6" stroke="#fff" />
        <path d="M12 17l3-3 2 2 3-3M11 20.500h8" stroke="#fff" />
      </Art>
    ),
  },
  {
    name: "MySQL Workbench",
    dot: "h-[3px] w-[6px] bg-[#80848f]",
    icon: (
      <Art>
        <rect x=".5" y=".5" width="23" height="23" rx="2" fill="#20547c" stroke="#173d5c" />
        <path d="M6 20c0-5-3-9-2-14 2-3 6-1 8 3 2 3 2 7 4 9l5 3M7 10c1 3 0 7 3 9l1-3" stroke="#e4edf4" strokeWidth="1.200" />
        <path d="M16 5l5 4M17 3l-1 3 3 1" stroke="#fff" strokeWidth="1.500" />
      </Art>
    ),
  },
  {
    name: "SQL Tools",
    dot: "h-[3px] w-[6px] bg-[#80848f]",
    icon: (
      <Art>
        <path d="M3 2v11c0 3 12 3 12 0V2z" fill="#f7c81e" />
        <ellipse cx="9" cy="2.500" rx="6" ry="2" fill="#ffe680" />
        <path d="M16 1h6v6M1 17v6h6" stroke="#1f8a3c" strokeWidth="2" />
        <path d="M12 12l8 9M20 12l-8 9" stroke="#2463b0" strokeWidth="2" />
        <path d="M10 11h4M18 11l3 3" stroke="#2463b0" strokeWidth="2.500" />
      </Art>
    ),
  },
  {
    name: "Visual Studio",
    dot: "h-[3px] w-[6px] bg-[#80848f]",
    icon: (
      <Art>
        <path d="M17 0l7 3v18l-7 3z" fill="#b285e8" />
        <path d="M17 0v7L4 19l-4-2V15z" fill="#7a45bd" />
        <path d="M0 7l4-2 13 12v7L0 9z" fill="#5a2d9a" />
      </Art>
    ),
  },
  {
    name: "Cat",
    dot: "h-[3px] w-[6px] bg-[#80848f]",
    icon: (
      <Art>
        <path d="M0 10h20v13H0z" fill="#f3f3f3" />
        <path d="M8 2l3 3h6l4-3v9l-4 4H9l-2-3z" fill="#a5a5a8" />
        <path d="M2 14l10-2 10 5v5l-8 1z" fill="#c9c9cc" />
        <path d="M11 8h2M17 8h2M1 20h8" stroke="#fff" strokeWidth="1.500" />
      </Art>
    ),
  },
];

function Taskbar() {
  return (
    <footer className="grid h-12 shrink-0 grid-cols-[1fr_auto_1fr] items-center bg-[linear-gradient(90deg,#e6eef7_0%,#e3eaf6_12%,#d5def5_19%,#d8dcf1_28%,#d6dff3_60%,#dde6f4_80%,#e5edf7_100%)]">
      <button className="flex items-center gap-2 pl-[21px] text-left text-xs leading-4 text-[#222]">
        <svg width="22" height="22" viewBox="0 0 22 22">
          <circle cx="8" cy="8" r="7" fill="#fdb92e" />
          <path d="M6 20a5 5 0 0 1-1-9 6 6 0 0 1 10-1 5 5 0 1 1 2 10z" fill="#dceaf5" />
          <path d="M9 19a5 5 0 0 1 1-6 5 5 0 0 1 7-2 4.500 4.500 0 0 1 0 9z" fill="#c5dcee" />
        </svg>
        <span>
          5°C
          <span className="block text-[#5d6068]">Kısmen güneşli</span>
        </span>
      </button>
      <nav className="flex gap-1 pl-px">
        {apps.map((a) => (
          <button key={a.name} aria-label={a.name} className={clsx("relative flex size-10 items-center justify-center rounded", a.tile)}>
            {a.icon}
            {a.badge && (
              <span className={clsx("absolute -top-px -right-px flex h-4 min-w-4 items-center justify-center rounded-full px-[3px] text-xs leading-none text-white", a.badgeColor)}>
                {a.badge}
              </span>
            )}
            {a.dot && (
              <span className="absolute inset-x-0 bottom-0 flex justify-center">
                <i className={clsx("rounded-full", a.dot)} />
              </span>
            )}
          </button>
        ))}
      </nav>
      <div className="flex items-center justify-end gap-2 pr-5 text-xs text-[#222]">
        <svg width="12" height="16" viewBox="0 0 12 16" fill="none"><path d="M1 11l5-5 5 5" stroke="#222" strokeWidth="1.300" /></svg>
        <svg width="18" height="16" viewBox="0 0 20 16">
          <path d="M5 13a4 4 0 0 1 0-7.500A5 5 0 0 1 14 5a4 4 0 0 1 2 8z" fill="#8d8d8d" stroke="#222" />
          <path d="M5 13l5-5q4-2 8 2-1 3-3 3z" fill="#e3e3e3" />
        </svg>
        <svg width="16" height="16" viewBox="0 0 16 16" fill="none" stroke="#222" className="ml-1">
          <path d="M.5 6q7.500-6 15 0M3 8.500q5-4 10 0M5 11q3-2.500 6 0" strokeWidth="1.200" />
          <circle cx="8" cy="13" r="1" fill="#222" />
        </svg>
        <svg width="16" height="16" viewBox="0 0 16 16" fill="none" stroke="#222">
          <path d="M1 6h3l4-4v12l-4-4H1zM11 6l4 4M15 6l-4 4" />
        </svg>
        <svg width="18" height="16" viewBox="0 0 18 16" fill="none" stroke="#222">
          <path d="M8 4.500h7.500v8h-11V9M17 7v3M2 1v3M5 1v3M1 4.500h5v2L4 8H3L1 6.500zM3.500 8v3" />
          <path d="M7 6h7v5H6.500z" fill="#222" />
        </svg>
        <time className="ml-[3px] text-right text-[#222] leading-4">
          09:57
          <br />
          22.02.2022
        </time>
        <span className="flex size-4 items-center justify-center rounded-full bg-[#0078d7] text-[11px] text-white">4</span>
      </div>
    </footer>
  );
}

export default function App() {
  return (
    <div className="flex h-screen flex-col bg-white font-['Open_Sans','Noto_Sans',sans-serif] text-[11px] text-black">
      <TitleBar />
      <Ribbon />
      <main className="flex min-h-0 flex-1 gap-1 pt-[2px] pr-[2px] pl-px">
        <div className="flex min-w-0 flex-1 flex-col">
          <Designer />
          <GroupExplorer />
        </div>
        <aside className="flex w-[236px] shrink-0 flex-col">
          <DataExplorer />
          <Properties />
        </aside>
      </main>
      <Taskbar />
    </div>
  );
}
